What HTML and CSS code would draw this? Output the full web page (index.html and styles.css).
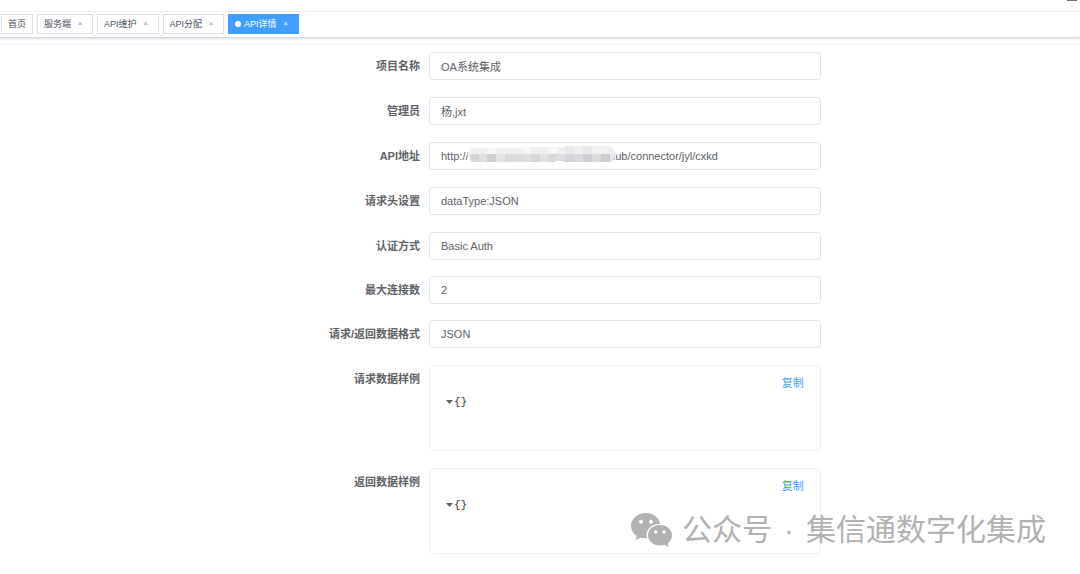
FILE: index.html
```html
<!DOCTYPE html>
<html lang="zh-CN">
<head>
<meta charset="utf-8">
<meta name="viewport" content="width=device-width, initial-scale=1">
<title>API详情</title>
<link rel="stylesheet" href="styles.css">
</head>
<body>
<header class="navbar"><span class="navbar-mark"></span></header>
<nav class="tags">
  <a class="tag" href="#">首页</a>
  <a class="tag" href="#">服务端<span class="close">×</span></a>
  <a class="tag" href="#">API维护<span class="close">×</span></a>
  <a class="tag" href="#">API分配<span class="close">×</span></a>
  <a class="tag active" href="#"><span class="dot"></span>API详情<span class="close">×</span></a>
</nav>
<main class="content">
  <form class="form">
    <div class="row"><label class="label" for="project">项目名称</label><input class="field" id="project" type="text" value="OA系统集成"></div>
    <div class="row"><label class="label" for="admin">管理员</label><input class="field" id="admin" type="text" value="杨,jxt"></div>
    <div class="row"><label class="label" for="url">API地址</label>
      <div class="masked">
        <input class="field" id="url" type="text" value="http://                                              hub/connector/jyl/cxkd">
        <svg class="mosaic" width="150" height="17" viewBox="0 0 150 17" aria-hidden="true">
          <clipPath id="edge"><path d="M4 2H55V1H98V0H144L150 8L145 16H96V15H88V16H5L0 8Z"/></clipPath>
          <g clip-path="url(#edge)">
            <path fill="#f0f0f1" d="M0 0h150v17H0z"/>
            <path fill="#f7f7f8" d="M20 2h9v6h-9zM55 1h9v6h-9zM81 1h9v6h-9z"/>
            <path fill="#e9e9ea" d="M99 0h9v8h-9zM116 0h9v8h-9z"/>
            <path fill="#d5d4d6" d="M3 8h9v8H3z"/><path fill="#e0dfe1" d="M12 8h8v8h-8z"/>
            <path fill="#cfced1" d="M20 8h9v8h-9z"/><path fill="#e3e5e9" d="M29 8h9v8h-9z"/>
            <path fill="#dad9db" d="M38 8h8v8h-8z"/><path fill="#dcdde0" d="M46 8h9v8h-9z"/>
            <path fill="#e0dfe0" d="M55 8h9v8h-9z"/><path fill="#d6d7da" d="M64 8h9v8h-9z"/>
            <path fill="#e2e1e2" d="M73 8h8v8h-8z"/><path fill="#d9d9dd" d="M81 8h9v8h-9z"/>
            <path fill="#dedde2" d="M90 8h8v8h-8z"/><path fill="#d4d5d8" d="M98 8h9v8h-9z"/>
            <path fill="#d9d8da" d="M107 8h9v8h-9z"/><path fill="#cfd0d3" d="M116 8h9v8h-9z"/>
            <path fill="#dbdbdd" d="M125 8h9v8h-9z"/><path fill="#cdccce" d="M134 8h9v8h-9z"/>
            <path fill="#e7e8eb" d="M143 8h7v8h-7z"/>
          </g>
        </svg>
      </div>
    </div>
    <div class="row"><label class="label" for="headers">请求头设置</label><input class="field" id="headers" type="text" value="dataType:JSON"></div>
    <div class="row compact"><label class="label" for="auth">认证方式</label><input class="field" id="auth" type="text" value="Basic Auth"></div>
    <div class="row compact"><label class="label" for="max">最大连接数</label><input class="field" id="max" type="text" value="2"></div>
    <div class="row"><label class="label" for="format">请求/返回数据格式</label><input class="field" id="format" type="text" value="JSON"></div>
    <div class="row"><span class="label">请求数据样例</span>
      <section class="panel">
        <button class="copy" type="button">复制</button>
        <div class="json"><svg class="caret" width="7" height="4" viewBox="0 0 7 4" aria-hidden="true"><path d="M0 0H7L3.500 4Z"/></svg><code>{}</code></div>
      </section>
    </div>
    <div class="row"><span class="label">返回数据样例</span>
      <section class="panel">
        <button class="copy" type="button">复制</button>
        <div class="json"><svg class="caret" width="7" height="4" viewBox="0 0 7 4" aria-hidden="true"><path d="M0 0H7L3.500 4Z"/></svg><code>{}</code></div>
      </section>
    </div>
  </form>
</main>
<div class="watermark">
  <svg width="42" height="34" viewBox="0 0 42 34" aria-hidden="true">
    <path fill="#b2b2b2" fill-rule="evenodd" d="M15 0C6.500 0 0 5.700 0 13C0 17.200 2.200 20.500 5.700 23L4.500 27L9.500 24.500C11.500 25.200 13.500 25.500 16 25.300A12 11 0 0 1 29.300 11.200C28 4.500 22 0 15 0ZM10 6.700a2 2 0 1 1 0 4a2 2 0 1 1 0-4ZM20 6.700a2 2 0 1 1 0 4a2 2 0 1 1 0-4Z"/>
    <path fill="#b2b2b2" fill-rule="evenodd" d="M29 12C22 12 17 16.500 17 22.300C17 28.200 22.200 32.600 29 32.600C30.700 32.600 32.300 32.200 33.700 31.800L37.700 34L36.700 30.500C39.500 28.300 41 25.600 41 22.300C41 16.500 35.700 12 29 12ZM24.800 17.200a1.700 1.700 0 1 1 0 3.400a1.700 1.700 0 1 1 0-3.400ZM33 17.200a1.700 1.700 0 1 1 0 3.400a1.700 1.700 0 1 1 0-3.400Z"/>
  </svg>
  <span>公众号</span><span class="point">·</span><span>集信通数字化集成</span>
</div>
</body>
</html>
```
FILE: styles.css
```css
* { box-sizing: border-box; }
body {
  margin: 0;
  position: relative;
  background: #fff;
  color: #606266;
  font-family: "Liberation Sans", "Noto Sans CJK SC", sans-serif;
  font-size: 11px;
}
.navbar {
  display: flex;
  justify-content: flex-end;
  height: 12px;
  padding-right: 3px;
  border-bottom: 1px solid #f0f3f4;
}
.navbar-mark { width: 10px; height: 1px; background: #6b6e75; }
.tags {
  display: flex;
  gap: 4px;
  height: 26px;
  padding: 2px 1px;
  border-bottom: 1px solid #d8dce5;
  box-shadow: 0 1px 2px #dddddd;
}
.tag {
  display: flex;
  align-items: center;
  height: 20px;
  padding: 0 6px;
  border: 1px solid #d8dce5;
  color: #495060;
  font-size: 9px;
  line-height: 18px;
  text-decoration: none;
  white-space: nowrap;
}
.tag.active { background: #409eff; border-color: #409eff; color: #fff; }
.close { width: 15px; padding-left: 3px; text-align: center; color: #909399; font-size: 8px; }
.active .close { color: #fff; }
.dot { width: 6px; height: 6px; margin-right: 3px; border-radius: 50%; background: #fff; }
.content { margin-top: 6px; border-top: 1px solid #f2f3f5; }
.form { padding: 7px 24% 3px 25%; }
.row {
  display: grid;
  grid-template-columns: 150px minmax(0, 1fr);
  column-gap: 9px;
  margin-bottom: 17px;
}
.row.compact { margin-bottom: 16px; }
.label { text-align: right; font-weight: 700; line-height: 28px; }
.field {
  display: block;
  width: 100%;
  height: 28px;
  padding: 0 11px;
  border: 1px solid #e1e4ea;
  border-radius: 3px;
  background: #fff;
  color: #606266;
  font: inherit;
}
.masked { position: relative; }
.mosaic { position: absolute; left: 38px; top: 4px; }
.panel {
  display: flex;
  flex-direction: column;
  min-height: 86px;
  padding: 8px 16px;
  border: 1px solid #f0f1f4;
  border-radius: 5px;
}
.copy {
  align-self: flex-end;
  padding: 0;
  border: 0;
  background: none;
  color: #409eff;
  font: inherit;
  line-height: 18px;
}
.json { display: flex; align-items: center; gap: 1px; height: 20px; color: #303133; }
.json code { font-family: "Liberation Mono", monospace; font-size: 11px; }
.caret { fill: #606266; }
.watermark {
  position: absolute;
  right: 34px;
  bottom: 24px;
  display: flex;
  align-items: center;
  color: #b2b2b2;
  font-size: 30px;
  line-height: 40px;
}
.watermark svg { margin-right: 9px; }
.point { width: 34px; text-align: center; }
```
